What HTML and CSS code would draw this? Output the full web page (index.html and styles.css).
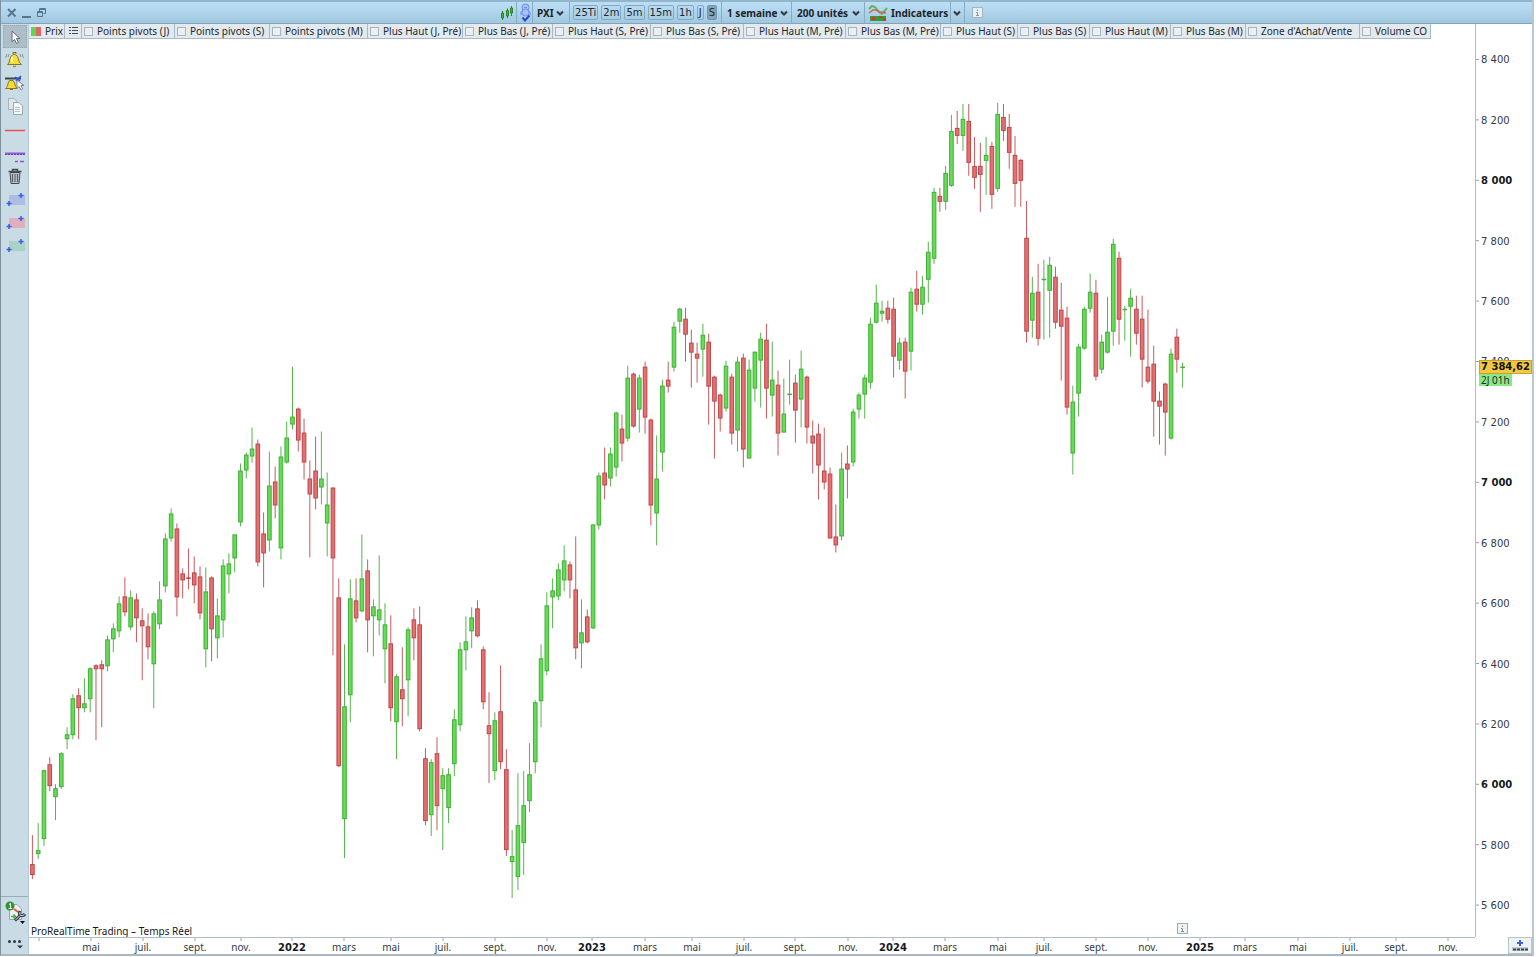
FILE: index.html
```html
<!DOCTYPE html>
<html lang="fr">
<head>
<meta charset="utf-8">
<title>PXI - 1 semaine</title>
<link rel="stylesheet" href="styles.css">
</head>
<body>
<div class="app">
  <header class="toolbar">
    <div class="window-controls">
      <button class="plain" aria-label="Fermer"><svg width="12" height="12"><path d="M2 2 9.500 9.500M9.500 2 2 9.500" class="ctl heavy"/></svg></button>
      <button class="plain" aria-label="Réduire"><svg width="12" height="12"><path d="M1 10H10" class="ctl heavy"/></svg></button>
      <button class="plain" aria-label="Restaurer"><svg width="12" height="12"><path d="M3.500 4V1.500H9.500V6.500H7.500M3.500 2.500H9.500M1.500 4.500H6.500V9.500H1.500ZM1.500 5.500H6.500" class="ctl"/></svg></button>
    </div>
    <div class="tools">
      <button class="tool chart-type" aria-label="Type de graphique"><svg width="16" height="18"><g stroke="#28852a" fill="#42b13c"><path d="M3.500 7V16M8.500 4.500V14M12.500 2V12"/><path d="M2.500 9H4.500V14H2.500ZM7.500 6.500H9.500V12H7.500ZM11.500 4H13.500V9H11.500Z"/></g></svg></button>
      <button class="tool link" aria-label="Lier"><svg width="14" height="20"><g fill="#a8c2fb" stroke="#6e8fe6"><circle cx="6.500" cy="4.500" r="3.500"/><circle cx="6.500" cy="9.500" r="3.500"/><path d="M5 4.500H8M3 8Q1 9 2 12M10 8Q12 9 11 12" fill="none"/></g><path d="M3.500 14.500 6 17.500 10.500 12.500" fill="none" stroke="#2448d6" stroke-width="2"/></svg></button>
      <label class="tool picker pxi"><select aria-label="Instrument"><option>PXI</option></select><svg class="chevron" width="8" height="6"><path d="M1 1.500 4 4.500 7 1.500"/></svg></label>
      <div class="tool frames">
        <button>25Ti</button><button>2m</button><button>5m</button><button>15m</button><button>1h</button><button>J</button><button class="active">S</button>
      </div>
      <label class="tool picker period"><select aria-label="Période"><option>1 semaine</option></select><svg class="chevron" width="8" height="6"><path d="M1 1.500 4 4.500 7 1.500"/></svg></label>
      <label class="tool picker units"><select aria-label="Unités"><option>200 unités</option></select><svg class="chevron" width="8" height="6"><path d="M1 1.500 4 4.500 7 1.500"/></svg></label>
      <button class="tool indicators"><svg width="20" height="18"><path d="M1 5 4 2 7 3 11 8 14 10 19 4" fill="none" stroke="#60b857" stroke-width="2"/><path d="M1 9 5 6 8 6 12 8 18 9" fill="none" stroke="#d65f5a" stroke-width="1.500"/><path d="M2 12H18V17H2Z" fill="#2d9e35"/><path d="M4 13H7V16H4ZM11 12H14V14H11ZM15 14H18V17H15Z" fill="#d9372c"/></svg>Indicateurs</button>
      <button class="tool more" aria-label="Plus"><svg class="chevron" width="8" height="6"><path d="M1 1.500 4 4.500 7 1.500"/></svg></button>
      <button class="plain info" aria-label="Informations"><svg width="11" height="11"><rect x=".5" y=".5" width="10" height="10" fill="#e8eff3" stroke="#a5b5be"/><path d="M5.500 2.500V4M4 5.500H5.500V8M4 8.500H7" stroke="#8a979f" fill="none"/></svg></button>
    </div>
  </header>

  <div class="workspace">
    <nav class="sidebar">
      <div class="side-group">
        <button class="active" aria-label="Sélection"><svg width="24" height="23"><path d="M9 6V17L11.500 14.500 13.500 18.500 15.500 17.500 13.500 13.500 17 13.500Z" fill="#f4f6f7" stroke="#667077"/></svg></button>
        <button aria-label="Alerte"><svg width="24" height="23"><path d="M4.500 16.500C7 15 6 11 8 8.500Q11 4 14.500 8.500C16 11 15.500 15 18.500 16.500Z" fill="#f6dc37" stroke="#8a7714"/><path d="M10 6V4.500H13V6M10 18Q11.500 19.500 13 18" fill="none" stroke="#7f6d17"/><path d="M4 6 2.500 10M6 6 5 9M19 6 20.500 10M17 6 18 9" fill="none" stroke="#89949b"/><path d="M9 9V14" stroke="#fff9a8" stroke-width="2"/></svg></button>
        <button aria-label="Alerte sur ligne"><svg width="24" height="23"><path d="M2.500 17.500C6 15 4 11 7 9.500H10C12 11 11.500 15 14 17.500ZM7 18.500H10" fill="#f6dc37" stroke="#8a7714"/><path d="M2 7.500H18" stroke="#3c474d" stroke-width="2"/><path d="M12 6 17 10M18 5 13 10" stroke="#2c4ce0" stroke-width="1.500"/><path d="M14 9V17.500L16 15.500 18 19 19.500 18 18 14.500H21Z" fill="#fff" stroke="#79858c"/></svg></button>
        <button aria-label="Copier"><svg width="24" height="23"><path d="M5.500 4.500H11L13.500 7V15.500H5.500Z" fill="#dde7ec" stroke="#a5b2b9"/><path d="M10.500 8.500H16L19.500 12V20.500H10.500Z" fill="#f5f8f9" stroke="#99a7af"/><path d="M12 13.500H17M12 15.500H17M12 17.500H17" stroke="#b7c2c8"/></svg></button>
        <button aria-label="Ligne horizontale"><svg width="24" height="23"><path d="M2 13.500H22" stroke="#ec5050" stroke-width="1.500"/></svg></button>
        <button aria-label="Ligne épaisse"><svg width="24" height="23"><path d="M2 13.500H22" stroke="#9457c7" stroke-width="2"/><path d="M2 14.500H22" stroke="#7c39bb" stroke-dasharray="2 1"/><path d="M12 21.500H15M17 21.500H21" stroke="#9457c7" stroke-width="1.500"/></svg></button>
        <button aria-label="Supprimer"><svg width="24" height="23"><path d="M7 9.500H17L16 20.500H8Z" fill="#b6bdc1" stroke="#444b50"/><path d="M5.500 8.500H18.500M9.500 8V6.500H14.500V8" fill="none" stroke="#444b50" stroke-width="1.500"/><path d="M9.500 11V19M12 11V19M14.500 11V19" stroke="#555d62"/></svg></button>
        <button aria-label="Zone bleue"><svg width="24" height="23"><rect x="6" y="9" width="16" height="10" fill="#acbce2"/><path d="M18 7V12M15.500 9.500H20.500M6 15V20M3.500 17.500H8.500" stroke="#385de2" stroke-width="1.500"/></svg></button>
        <button aria-label="Zone rouge"><svg width="24" height="23"><rect x="6" y="9" width="16" height="10" fill="#dfafba"/><path d="M18 7V12M15.500 9.500H20.500M6 15V20M3.500 17.500H8.500" stroke="#385de2" stroke-width="1.500"/></svg></button>
        <button aria-label="Zone verte"><svg width="24" height="23"><rect x="6" y="9" width="16" height="10" fill="#aad2c4"/><path d="M18 7V12M15.500 9.500H20.500M6 15V20M3.500 17.500H8.500" stroke="#385de2" stroke-width="1.500"/></svg></button>
      </div>
      <div class="side-group side-bottom">
        <button aria-label="Réglages"><svg width="24" height="28"><path d="M6.500 6.500H14L18.500 11V21.500H6.500Z" fill="#eef2f4" stroke="#97a3aa"/><circle cx="7" cy="8" r="4.500" fill="#31942c"/><path d="M6 6.500 7.500 5.500V10.500M5.500 10.500H9" stroke="#fff" fill="none"/><path d="M11 11 15 14" stroke="#ef5350" stroke-width="2"/><path d="M8 18.500H12M10.500 16.500 12.500 18.500 10.500 20.500" stroke="#3fb440" stroke-width="1.500" fill="none"/><path d="M12 22.500 17 17.500M17 13Q15.500 17 18 17.500Q20.500 18 22 16" stroke="#303a40" stroke-width="3" fill="none"/><path d="M12.500 22 17 17.500M17 14Q16 17 18 17.500Q20 17.800 21.500 16.500" stroke="#d3dde2" fill="none"/><path d="M17 23H22L19.500 26Z" fill="#111"/></svg></button>
        <button aria-label="Autres outils"><svg width="24" height="28"><g fill="#30383d"><circle cx="6.500" cy="15.500" r="1.500"/><circle cx="11.500" cy="15.500" r="1.500"/><circle cx="16.500" cy="15.500" r="1.500"/><path d="M14 19.500H20L17 22.500Z"/></g></svg></button>
      </div>
    </nav>

    <main class="chart">
      <div class="legend">
        <div class="cell price"><span class="swatch"></span>Prix</div>
        <button class="cell list" aria-label="Liste"><svg width="10" height="10"><path d="M0 1.500H2M0 4.500H2M0 7.500H2M3 1.500H9M3 4.500H9M3 7.500H9" stroke="#424c52"/></svg></button>
        <label class="cell"><input type="checkbox">Points pivots (J)</label>
        <label class="cell"><input type="checkbox">Points pivots (S)</label>
        <label class="cell"><input type="checkbox">Points pivots (M)</label>
        <label class="cell"><input type="checkbox">Plus Haut (J, Pré)</label>
        <label class="cell"><input type="checkbox">Plus Bas (J, Pré)</label>
        <label class="cell"><input type="checkbox">Plus Haut (S, Pré)</label>
        <label class="cell"><input type="checkbox">Plus Bas (S, Pré)</label>
        <label class="cell"><input type="checkbox">Plus Haut (M, Pré)</label>
        <label class="cell"><input type="checkbox">Plus Bas (M, Pré)</label>
        <label class="cell"><input type="checkbox">Plus Haut (S)</label>
        <label class="cell"><input type="checkbox">Plus Bas (S)</label>
        <label class="cell"><input type="checkbox">Plus Haut (M)</label>
        <label class="cell"><input type="checkbox">Plus Bas (M)</label>
        <label class="cell"><input type="checkbox">Zone d'Achat/Vente</label>
        <label class="cell"><input type="checkbox">Volume CO</label>
      </div>
      <div class="axis-head"></div>
      <div class="plot">
        <svg id="candles" class="fill" viewBox="29 39 1446 899" preserveAspectRatio="none" role="img" aria-label="Cours hebdomadaire"></svg>
        <span class="credit">ProRealTime Trading – Temps Réel</span>
        <svg class="event" width="11" height="11"><rect x=".5" y=".5" width="10" height="10" fill="#eef2f5" stroke="#9dadb7"/><path d="M5.500 2.500V4M4 5.500H5.500V8M4 8.500H7" stroke="#808d95" fill="none"/></svg>
      </div>
      <div class="y-axis">
        <svg id="prices" class="fill"></svg>
        <div class="quote"><span class="last">7 384,62</span><span class="countdown">2J 01h</span></div>
      </div>
      <div class="x-axis"><svg id="dates" class="fill"></svg></div>
      <div class="axis-corner"><button aria-label="Ajuster"><svg width="18" height="13"><path d="M9 1V7M6 4H12" stroke="#3f63e0" stroke-width="2"/><rect x="1" y="8" width="16" height="4" fill="#c5ced3"/><path d="M2 10.500H17" stroke="#3d464b" stroke-width="2" stroke-dasharray="3 1"/></svg></button></div>
    </main>
  </div>
</div>
<script src="chart.js"></script>
</body>
</html>
```

FILE: styles.css
```css
* { box-sizing: border-box; }

body {
  margin: 0;
  background: #fff;
  color: #22282c;
  font: 10px/14px "Noto Sans", "DejaVu Sans", sans-serif;
}

button, select, input {
  margin: 0;
  padding: 0;
  border: 0;
  background: none;
  color: inherit;
  font: inherit;
}

svg { display: block; }

.app {
  display: flex;
  flex-direction: column;
  height: calc(100vh - 1px);
  min-height: 480px;
  margin-right: 2px;
  border-left: 1px solid #7d929e;
  border-right: 2px solid #b9c7cf;
  border-bottom: 2px solid #a9b8c1;
}

/* Title bar */
.toolbar {
  display: grid;
  grid-template-columns: 32.4% auto 1fr;
  height: 24px;
  border-top: 2px solid #93b5ca;
  border-bottom: 1px solid #7fa5bc;
  background: linear-gradient(#bbdff6, #a1c8e0);
}

.window-controls {
  display: flex;
  align-items: center;
  gap: 3px;
  padding-left: 5px;
}

.ctl { fill: none; stroke: #56768c; }
.heavy { stroke-width: 2; }

.tools { display: flex; align-items: stretch; white-space: nowrap; }

.tool {
  display: flex;
  align-items: center;
  border-right: 1px solid #86abc2;
}

.chart-type { width: 20px; padding-left: 2px; }
.link { width: 16px; padding-left: 2px; }

.picker, .indicators { font-weight: 700; color: #1c2429; }
.picker { display: grid; grid-template-columns: 1fr; }
.picker select { grid-area: 1 / 1; width: 100%; appearance: none; }
.picker .chevron { grid-area: 1 / 1; justify-self: end; pointer-events: none; }
.chevron { fill: none; stroke: #2b3a44; stroke-width: 2; }
.pxi { width: 37px; padding: 0 5px 0 4px; }
.period { width: 70px; padding: 0 3px 0 5px; }
.units { width: 73px; padding: 0 4px 0 5px; }
.indicators { width: 86px; gap: 3px; padding-left: 3px; }
.more { width: 14px; padding-left: 2px; }
.info { padding-left: 7px; }

.frames {
  gap: 3px;
  padding: 0 4px 0 3px;
  font-family: "DejaVu Sans", sans-serif;
}

.frames button {
  height: 15px;
  padding: 0 1px;
  border: 1px solid #86a9c0;
  border-radius: 2px;
  line-height: 13px;
}

.frames .active { background: #82a4ba; border-color: #7396ad; }

/* Drawing tools */
.workspace { display: flex; flex: 1; min-height: 0; }

.sidebar {
  display: flex;
  flex-direction: column;
  justify-content: space-between;
  flex: 0 0 28px;
  border-right: 1px solid #b4cad6;
  background: #c9dce6;
}

.side-group { display: flex; flex-direction: column; align-items: center; padding-top: 1px; }
.side-bottom { border-top: 1px solid #97acb9; }
.sidebar .active { background: #adbec8; outline: 1px dotted #94a6b0; outline-offset: -1px; }

/* Chart frame */
.chart {
  display: grid;
  grid-template-columns: 1fr 57px;
  grid-template-rows: 15px 1fr 17px;
  flex: 1;
  min-width: 0;
}

.legend {
  display: grid;
  grid-template-columns: 36px 17px 93px 95px 98px 95px 90px 98px 93px 102px 95px 77px 72px 81px 75px 114px 71px;
  justify-content: start;
  overflow: hidden;
  white-space: nowrap;
}

.cell {
  display: flex;
  align-items: center;
  gap: 4px;
  padding-left: 2px;
  border-right: 1px solid #a9bac4;
  border-bottom: 1px solid #a9bac4;
  background: #e2eaf0;
}

.list { padding-left: 4px; }

.swatch {
  width: 10px;
  height: 9px;
  background: linear-gradient(90deg, #5fd652 50%, #e26566 50%);
}

.cell input {
  appearance: none;
  width: 9px;
  height: 9px;
  border: 1px solid #a8b4bc;
  background: #e9eff3;
}

.axis-head, .y-axis { border-left: 1px solid #aabdc9; }

.plot, .y-axis, .x-axis { position: relative; min-height: 0; }

.fill { width: 100%; height: 100%; overflow: visible; position: absolute; inset: 0; }

.up { fill: #65db56; stroke: #43ae38; }
.down { fill: #e47071; stroke: #bd464a; }
line.up { stroke: #56b34c; }
line.down { stroke: #c65a5e; }

.credit { position: absolute; left: 2px; bottom: -1px; color: #15191b; }
.event { position: absolute; left: 79.4%; bottom: 3px; }

.x-axis { border-top: 1px solid #aabdc9; }

.tick { stroke: #8fa2ae; }
.price-label { font-family: "DejaVu Sans", sans-serif; fill: #353b3f; }
.date-label { fill: #353b3f; text-anchor: middle; }
.major { font-family: "DejaVu Sans", sans-serif; font-weight: 700; fill: #15191b; }

.quote {
  position: absolute;
  top: 36.5%;
  left: 3px;
  margin-top: -7px;
  display: flex;
  flex-direction: column;
  align-items: flex-start;
  font-family: "DejaVu Sans", sans-serif;
  line-height: 12px;
  white-space: nowrap;
}

.last { padding: 0 1px; border: 1px solid #c9a02c; background: #f0c843; font-weight: 700; color: #161200; }
.countdown { padding: 0 2px; background: #8ce884; font-family: "Noto Sans", sans-serif; }

.axis-corner { display: flex; justify-content: flex-end; }
.axis-corner button { padding: 1px 2px; border: 1px solid #b5c4ce; background: #edf2f5; }
```

FILE: chart.js
```js
// One weekly bar per entry: direction, high, body top, body bottom, low.
const bars = `
d 836 865 876 880|u 824 851 855 860|u 771 771 840 847|d 758 765 787 792|u 785 789 798 821|u 753 754 788 790|u 728 735 740 750|u 695 699 736 740|d 689 696 709 740|u 679 704 709 713
u 668 669 700 713|d 665 666 670 741|d 661 665 670 728|u 636 640 667 672|u 624 629 640 653|u 597 604 632 638|d 578 597 613 617|u 591 598 628 631|d 594 600 619 643|d 609 621 627 681
d 614 627 648 660|u 612 614 665 709|u 582 600 625 630|u 534 539 587 593|u 509 514 539 542|d 524 529 598 617|d 569 574 581 599|d 549 578 578 590|d 557 573 586 604|d 567 577 614 620
u 568 592 650 668|d 577 578 630 662|u 599 616 639 659|u 560 566 621 638|u 554 564 575 594|u 535 535 559 573|u 464 471 523 527|u 453 455 471 479|u 428 449 457 463|d 440 444 563 567
d 513 534 554 588|u 452 486 541 552|d 467 482 506 519|u 447 457 549 560|u 422 438 463 464|u 367 417 425 430|d 408 409 441 452|d 419 433 463 480|d 461 479 495 558|d 437 471 499 510
u 432 479 488 505|u 473 505 524 557|d 488 488 559 656|d 579 598 767 768|u 645 707 820 859|u 580 599 696 723|d 579 601 619 623|u 535 579 612 613|d 560 571 621 653|u 600 607 617 657
u 556 610 621 636|u 604 625 650 684|d 616 644 709 722|u 675 677 723 760|d 648 690 700 727|u 628 630 681 717|d 609 620 639 661|d 607 625 730 732|d 749 759 822 826|u 760 763 816 837
d 738 754 807 831|u 769 776 790 851|u 769 775 809 824|u 710 720 765 777|u 643 650 726 732|u 617 642 651 671|u 608 618 632 649|d 601 609 637 638|d 647 650 703 710|d 693 726 735 784
u 713 721 772 781|d 666 712 763 770|d 750 770 851 857|u 831 857 863 899|u 774 826 878 891|u 772 806 844 876|u 744 775 802 813|u 701 703 763 774|u 645 659 702 728|u 593 606 672 676
u 579 591 598 629|u 564 570 597 601|u 546 561 581 592|d 562 565 581 599|d 537 590 649 660|u 600 633 644 669|d 610 617 643 644|u 525 525 629 630|u 473 476 526 530|d 448 473 486 500
u 448 454 479 487|u 412 413 468 477|d 415 429 444 462|u 366 378 439 442|d 373 374 427 428|u 375 378 410 433|d 362 367 418 434|d 419 420 506 526|u 436 479 514 546|u 380 386 453 472
d 362 380 387 393|u 322 327 368 372|u 308 309 322 333|d 308 319 335 362|d 330 343 353 388|d 343 354 359 383|u 324 335 350 377|d 334 342 387 425|d 376 377 402 459|d 394 395 419 432
u 361 366 409 412|d 374 377 434 445|u 357 362 431 452|d 354 358 450 468|u 360 370 459 459|u 352 352 389 402|u 333 339 361 408|d 324 340 389 419|u 342 380 396 417|d 371 385 434 456
u 379 414 433 433|u 360 394 395 405|d 375 383 411 443|u 351 369 400 428|d 376 377 428 444|d 421 436 444 474|d 424 434 466 500|d 428 471 483 490|d 468 474 539 539|d 505 537 546 553
u 453 469 537 541|d 446 464 470 499|u 409 412 463 467|u 393 395 410 419|u 375 378 395 419|u 318 324 383 389|u 285 303 323 324|u 301 311 314 322|d 301 308 320 324|d 298 309 357 378
u 338 343 361 370|d 338 342 372 399|u 288 292 352 371|d 271 289 305 312|u 276 287 305 315|u 242 252 280 303|u 188 192 259 264|d 188 196 202 212|u 166 173 202 210|u 115 131 186 187
d 111 128 136 144|u 104 119 136 151|d 104 121 163 176|d 137 166 178 189|d 143 166 175 212|u 137 155 161 195|d 142 146 195 209|u 103 114 189 192|d 104 117 131 141|d 114 127 153 169
d 136 155 184 207|d 159 160 181 207|d 201 238 332 343|u 277 293 321 338|d 264 292 339 346|u 260 279 280 340|u 257 265 291 338|d 267 277 323 329|d 283 310 327 381|d 307 318 408 415
u 386 402 454 475|u 344 347 394 417|u 307 309 349 350|u 274 292 309 313|d 280 293 377 381|u 335 342 370 374|u 297 332 353 354|u 239 244 332 346|d 252 258 320 345|u 306 309 310 341
u 289 298 307 357|d 296 309 334 345|d 296 319 360 388|d 310 367 382 384|d 346 364 402 437|d 392 401 407 445|d 383 384 413 456|u 349 354 439 440|d 329 337 360 373|u 363 367 368 388
`.trim().split(/[|\n]/).map(row => row.split(' '));

const view = { left: 29, top: 39, width: 1446, height: 899 };
const firstBar = 32.4;
const barStep = 5.78;

function add(parent, tag, attrs, text) {
  const node = document.createElementNS('http://www.w3.org/2000/svg', tag);
  for (const [key, value] of Object.entries(attrs)) node.setAttribute(key, value);
  if (text) node.textContent = text;
  parent.append(node);
}

const candles = document.getElementById('candles');
bars.forEach(([dir, ...levels], i) => {
  const [high, top, bottom, low] = levels.map(Number);
  const x = firstBar + i * barStep;
  const cls = dir === 'u' ? 'up' : 'down';
  add(candles, 'line', { class: cls, x1: x, x2: x, y1: high, y2: low });
  add(candles, 'rect', { class: cls, x: x - 1.8, y: top + 0.5, width: 3.6, height: Math.max(bottom - top - 1, 0.5) });
});

const prices = document.getElementById('prices');
for (let k = 0; k < 15; k++) {
  const value = 8400 - 200 * k;
  const y = (59.5 + 60.47 * k - view.top) / view.height * 100 + '%';
  const major = value % 1000 === 0 ? ' major' : '';
  add(prices, 'line', { class: 'tick', x1: 0, x2: 3, y1: y, y2: y });
  add(prices, 'text', { class: 'price-label' + major, x: 5, y, dy: 4 }, String(value).replace(/(\d)(\d{3})/, '$1 $2'));
}

const dates = document.getElementById('dates');
[[39, ''], [91, 'mai'], [143, 'juil.'], [195, 'sept.'], [241, 'nov.'], [292, '2022'], [344, 'mars'], [391, 'mai'],
 [443, 'juil.'], [495, 'sept.'], [547, 'nov.'], [592, '2023'], [645, 'mars'], [692, 'mai'], [744, 'juil.'],
 [795, 'sept.'], [848, 'nov.'], [893, '2024'], [945, 'mars'], [998, 'mai'], [1044, 'juil.'], [1096, 'sept.'],
 [1148, 'nov.'], [1200, '2025'], [1245, 'mars'], [1298, 'mai'], [1350, 'juil.'], [1396, 'sept.'], [1448, 'nov.']
].forEach(([px, label]) => {
  const x = (px - view.left) / view.width * 100 + '%';
  add(dates, 'line', { class: 'tick', x1: x, x2: x, y1: 0, y2: 3 });
  add(dates, 'text', { class: 'date-label' + (/^\d/.test(label) ? ' major' : ''), x, y: 13 }, label);
});
```
